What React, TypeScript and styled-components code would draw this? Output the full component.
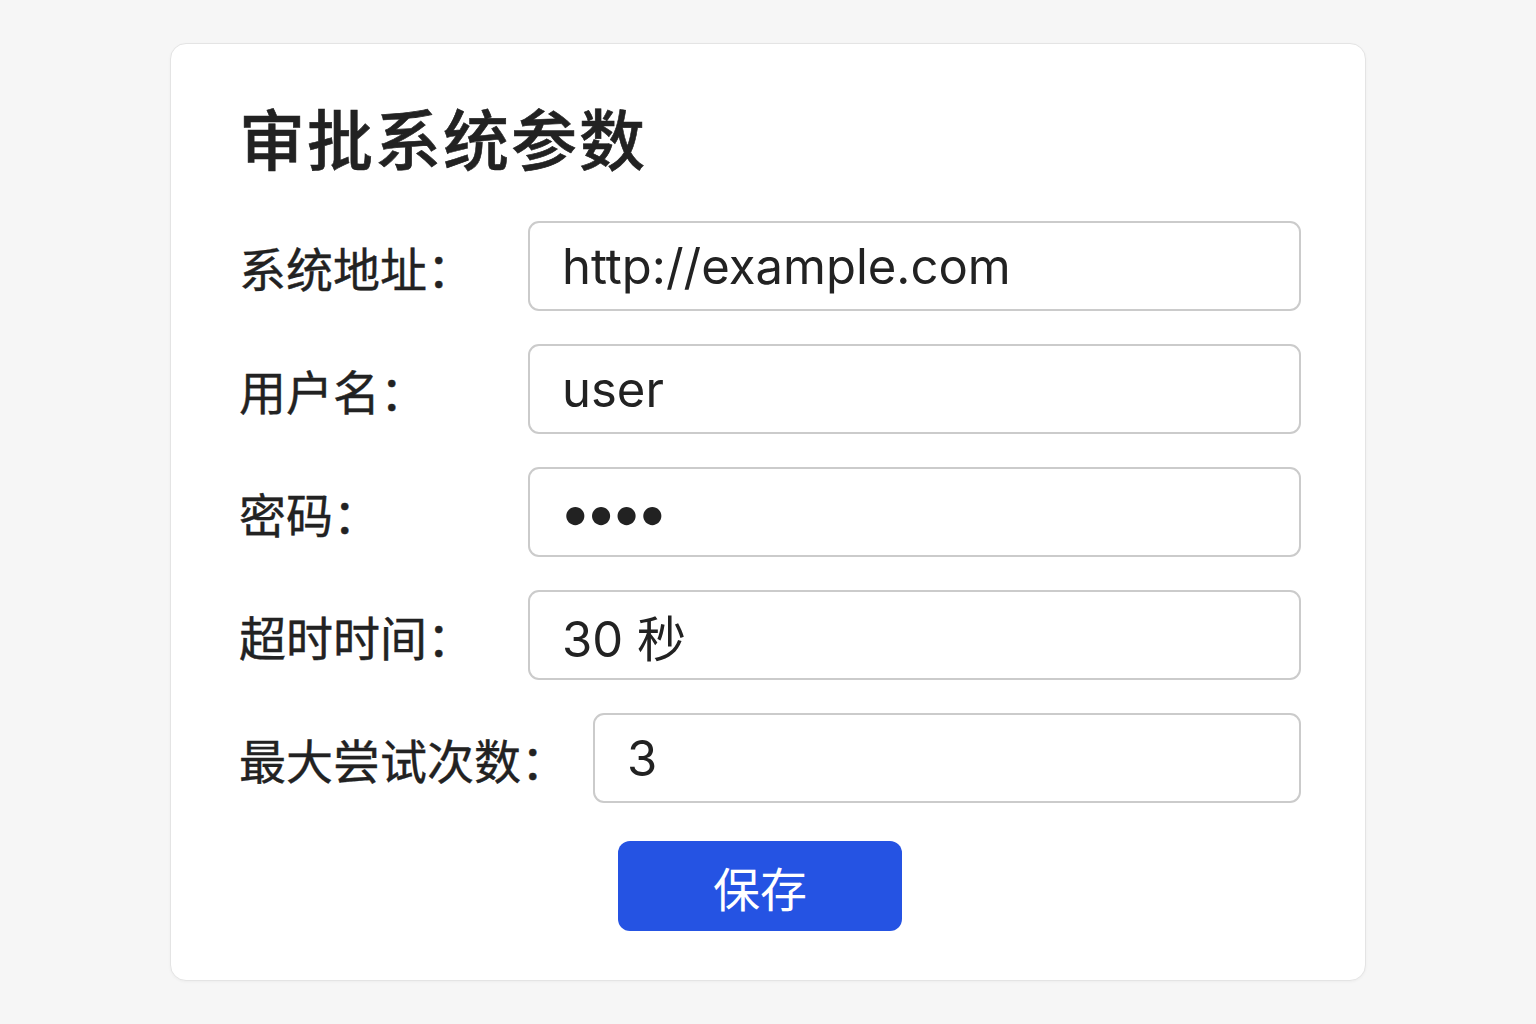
import React, { useState } from 'react';
import styled, { createGlobalStyle } from 'styled-components';

const GlobalStyle = createGlobalStyle`
  html, body {
    margin: 0;
    padding: 0;
    background: #f6f6f6;
  }
  body {
    font-family: Inter, 'Noto Sans CJK SC', sans-serif;
    color: #222;
  }
`;

interface Field {
  label: string;
  value: string;
  type?: string;
}

const fields: Field[] = [
  { label: '系统地址：', value: 'http://example.com' },
  { label: '用户名：', value: 'user' },
  { label: '密码：', value: '1234', type: 'password' },
  { label: '超时时间：', value: '30 秒' },
  { label: '最大尝试次数：', value: '3' },
];

function App() {
  const [values, setValues] = useState<string[]>(fields.map(f => f.value));

  const HandleChange = (index: number, v: string) => {
    const copy = [...values];
    copy[index] = v;
    setValues(copy);
  };

  return (
    <Page>
      <GlobalStyle />
      <Card>
        <Title>审批系统参数</Title>
        <Form onSubmit={e => e.preventDefault()}>
          {fields.map((field, index) => (
            <Row key={index}>
              <Label htmlFor={`field-${index}`}>{field.label}</Label>
              <Input
                id={`field-${index}`}
                type={field.type || 'text'}
                value={values[index]}
                $password={field.type === 'password'}
                onChange={e => HandleChange(index, e.target.value)}
              />
            </Row>
          ))}
          <ButtonLayer>
            <SaveBtn type="submit">保存</SaveBtn>
          </ButtonLayer>
        </Form>
      </Card>
    </Page>
  );
}
export default App;

const Page = styled.div`
  min-height: 1024px;
  display: flex;
  justify-content: center;
  align-items: flex-start;
  padding-top: 43px;
  box-sizing: border-box;
`;

const Card = styled.div`
  width: 1196px;
  box-sizing: border-box;
  padding: 59px 64px 49px 68px;
  background: #fff;
  border: 1px solid #e4e4e4;
  border-radius: 16px;
  box-shadow: 0 1px 3px rgba(0, 0, 0, 0.04);
`;

const Title = styled.h1`
  margin: 0 0 52px;
  font-family: 'Noto Sans CJK SC', sans-serif;
  font-size: 66px;
  line-height: 1;
  font-weight: 500;
  color: #222;
  letter-spacing: 2px;
  -webkit-text-stroke: 0.6px #222;
`;

const Form = styled.form`
  display: flex;
  flex-direction: column;
  gap: 33px;
`;

const Row = styled.div`
  display: flex;
  align-items: center;
  gap: 25px;
`;

const Label = styled.label`
  flex: 0 0 auto;
  min-width: 264px;
  font-family: 'Noto Sans CJK SC', sans-serif;
  font-size: 47px;
  font-weight: 400;
  color: #222;
  white-space: nowrap;
  -webkit-text-stroke: 0.4px #222;
`;

const Input = styled.input<{ $password: boolean }>`
  flex: 1;
  min-width: 0;
  height: 90px;
  box-sizing: border-box;
  padding: 0 32px 0 ${props => (props.$password ? '29px' : '32px')};
  border: 2px solid #cbcbcb;
  border-radius: 11px;
  background: #fff;
  color: #222;
  font-family: Inter, 'Noto Sans CJK SC', sans-serif;
  font-size: ${props => (props.$password ? '58px' : '49px')};
  letter-spacing: ${props => (props.$password ? '-7px' : '0')};
  outline: none;
`;

const ButtonLayer = styled.div`
  display: flex;
  justify-content: center;
  margin-top: 5px;
  padding-right: 20px;
`;

const SaveBtn = styled.button`
  width: 284px;
  height: 90px;
  border: none;
  border-radius: 12px;
  background: #2553e3;
  color: #fff;
  font-family: 'Noto Sans CJK SC', sans-serif;
  font-size: 47px;
  font-weight: 400;
  cursor: pointer;
`;
